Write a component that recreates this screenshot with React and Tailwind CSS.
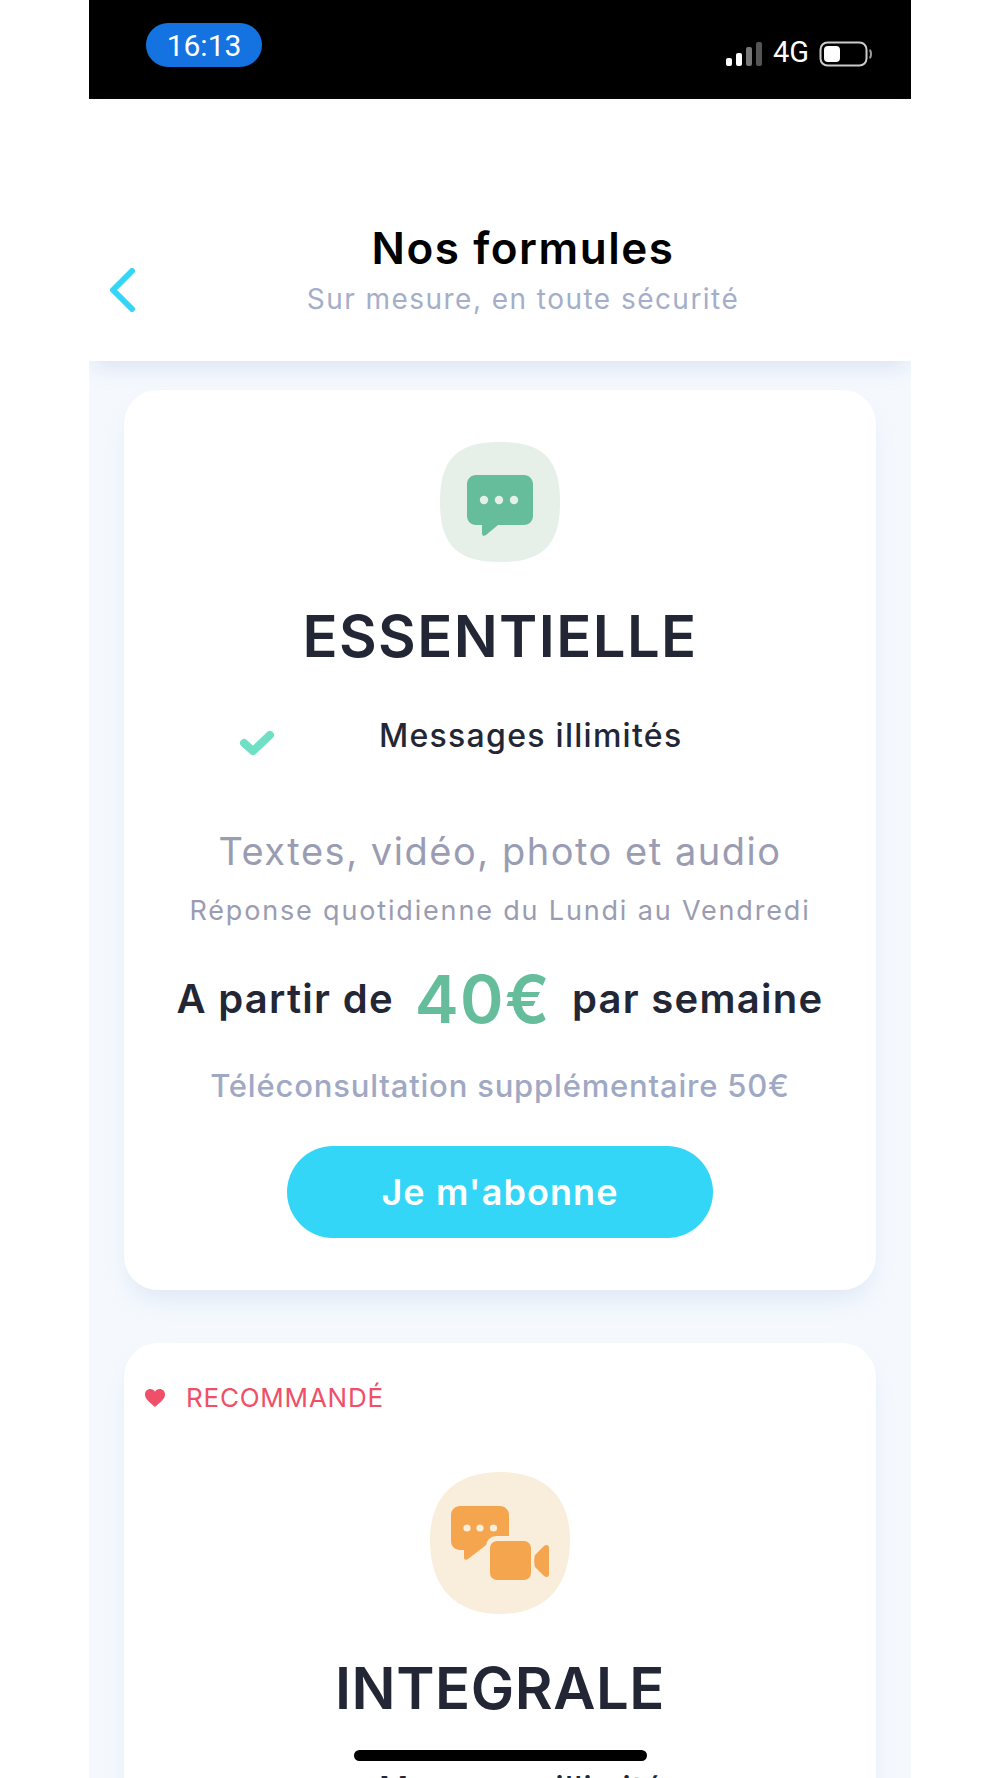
const font = { fontFamily: "'Inter', 'Noto Sans', sans-serif" };

function ChatIcon() {
	return (
		<svg width="120" height="120" viewBox="0 0 120 120" className="block">
			<path d="M60 0C103 0 120 17 120 60C120 103 103 120 60 120C17 120 0 103 0 60C0 17 17 0 60 0Z" fill="#e6efe8" />
			<path d="M36 33H84C89 33 93 37 93 42V74C93 79 89 83 84 83H58L46 93C44 94.500 42 94 42 91V83H36C31 83 27 79 27 74V42C27 37 31 33 36 33Z" fill="#66bd9c" />
			<circle cx="44" cy="58" r="4.200" fill="#e6efe8" />
			<circle cx="59" cy="58" r="4.200" fill="#e6efe8" />
			<circle cx="74" cy="58" r="4.200" fill="#e6efe8" />
		</svg>
	);
}

function ChatVideoIcon() {
	return (
		<svg width="140" height="142" viewBox="0 0 140 142" className="block">
			<path d="M70 0C116 0 140 26 140 68C140 114 116 142 70 142C24 142 0 114 0 68C0 26 24 0 70 0Z" fill="#f9eedb" />
			<path d="M30 34H70C75 34 79 38 79 43V70H60L38 87C36 88.500 34 88 34 85V78H30C25 78 21 74 21 69V43C21 38 25 34 30 34Z" fill="#f5a54d" />
			<circle cx="37" cy="56" r="3.600" fill="#f9eedb" />
			<circle cx="50" cy="56" r="3.600" fill="#f9eedb" />
			<circle cx="63.500" cy="56" r="3.600" fill="#f9eedb" />
			<rect x="56" y="64" width="50" height="48" rx="10" fill="#f9eedb" />
			<rect x="60" y="69" width="41" height="39" rx="7" fill="#f5a54d" />
			<path d="M105 83L114 74C116.500 72 119 73 119 76V102C119 105 116.500 106 114 104L105 95C104 92 104 86 105 83Z" fill="#f5a54d" />
		</svg>
	);
}

function StatusBar() {
	return (
		<div className="h-[99px] bg-black flex items-start justify-between pl-[57px] pr-[38px]">
			<div className="mt-[23px] w-[116px] h-[44px] rounded-[22px] bg-[#1473e0] flex items-center justify-center text-white text-[30px] pt-[1px] font-['Roboto',sans-serif]">
				16:13
			</div>
			<div className="mt-[40px] flex items-center gap-[10px]">
				<svg width="38" height="26" viewBox="0 0 38 26">
					<rect x="1" y="17" width="6" height="8" rx="2" fill="#fff" />
					<rect x="11" y="12" width="6" height="13" rx="2" fill="#fff" />
					<rect x="21" y="6" width="6" height="19" rx="2" fill="#777" />
					<rect x="31" y="1" width="6" height="24" rx="2" fill="#555" />
				</svg>
				<span className="text-white text-[29px] leading-none -mt-[2px] font-['Roboto',sans-serif]">4G</span>
				<svg width="54" height="26" viewBox="0 0 54 26">
					<rect x="1.500" y="1.500" width="46" height="23" rx="7" fill="none" stroke="#ccc" strokeWidth="2" />
					<rect x="5" y="5" width="16" height="16" rx="4" fill="#fff" />
					<path d="M50.500 9C52.500 10 52.500 16 50.500 17" fill="none" stroke="#999" strokeWidth="2" />
				</svg>
			</div>
		</div>
	);
}

function Header() {
	return (
		<div className="relative h-[262px] bg-white flex items-start shadow-[0_10px_20px_-4px_rgba(150,170,215,0.28)]">
			<div className="w-[46px] pl-[20px] pt-[169px] shrink-0">
				<svg width="27" height="44" viewBox="0 0 27 44" fill="none" stroke="#33d6f6" strokeWidth="6" strokeLinecap="round" strokeLinejoin="round">
					<path d="M23 3L4 22L23 41" />
				</svg>
			</div>
			<div className="flex-1 pt-[122px] text-center">
				<h1 className="text-[44px] leading-[54px] font-semibold text-black tracking-[0.035em]">Nos formules</h1>
				<p className="text-[28px] leading-[36px] mt-[6px] tracking-[0.052em] text-[#a5aec8]">Sur mesure, en toute sécurité</p>
			</div>
		</div>
	);
}

function FeatureRow({ className }) {
	return (
		<div className={`w-full flex items-center pl-[115px] ${className}`}>
			<svg width="36" height="28" viewBox="0 0 36 28" className="mt-[14px]">
				<path d="M5 14L14 22L31 6" fill="none" stroke="#6fe0c4" strokeWidth="8" strokeLinecap="round" strokeLinejoin="round" />
			</svg>
			<span className="ml-[104px] text-[32px] leading-[40px] font-medium text-[#232735] tracking-[0.04em]">Messages illimités</span>
		</div>
	);
}

function EssentielleCard() {
	return (
		<section className="h-[900px] rounded-[34px] bg-white shadow-[0_14px_26px_-6px_rgba(130,160,210,0.2)] flex flex-col items-center pt-[52px]">
			<ChatIcon />
			<h2 className="mt-[39px] text-[58px] leading-[70px] font-semibold text-[#232735] tracking-[0.024em]">ESSENTIELLE</h2>
			<FeatureRow className="mt-[44px]" />
			<p className="mt-[70px] text-[38px] leading-[48px] text-[#9a9cb2] tracking-[0.04em]">Textes, vidéo, photo et audio</p>
			<p className="mt-[18px] text-[27px] leading-[36px] text-[#9a9cb2] tracking-[0.068em]">Réponse quotidienne du Lundi au Vendredi</p>
			<div className="mt-[32px] flex items-center h-[76px] text-[#232735] font-semibold text-[40px] tracking-[0.032em]">
				<span>A partir de</span>
				<span className="mx-[21px] text-[66px] leading-none text-[#66bd9c] font-semibold">40€</span>
				<span>par semaine</span>
			</div>
			<p className="mt-[29px] text-[31px] leading-[40px] font-medium text-[#a0a9c4] tracking-[0.026em]">Téléconsultation supplémentaire 50€</p>
			<button className="mt-[40px] w-[426px] h-[92px] rounded-full bg-[#33d6f6] text-white text-[36px] font-semibold tracking-[0.03em]">Je m'abonne</button>
		</section>
	);
}

function IntegraleCard() {
	return (
		<section className="mt-[53px] rounded-[34px] bg-white pt-[40px] pb-[40px] shadow-[0_14px_26px_-6px_rgba(130,160,210,0.2)]">
			<div className="flex items-center pl-[20px] h-[30px]">
				<svg width="22" height="20" viewBox="0 0 24 22">
					<path d="M12 21C5 15 1 12 1 7C1 3.500 3.500 1 6.800 1C9 1 11 2.200 12 4C13 2.200 15 1 17.200 1C20.500 1 23 3.500 23 7C23 12 19 15 12 21Z" fill="#ef4f68" />
				</svg>
				<span className="ml-[20px] text-[26px] leading-none text-[#ef4f68] tracking-[0.03em]">RECOMMANDÉ</span>
			</div>
			<div className="mt-[59px] flex justify-center">
				<ChatVideoIcon />
			</div>
			<h2 className="mt-[39px] text-center text-[58px] leading-[70px] font-semibold text-[#232735] tracking-[0.01em]">INTEGRALE</h2>
			<FeatureRow className="mt-[45px]" />
		</section>
	);
}

export default function App() {
	return (
		<div className="relative w-[1000px] h-[1778px] overflow-hidden bg-white" style={font}>
			<div className="mx-auto w-[822px] h-full overflow-hidden bg-[#f5f9fe]">
				<StatusBar />
				<Header />
				<main className="px-[35px] pt-[29px]">
					<EssentielleCard />
					<IntegraleCard />
				</main>
			</div>
			{/* home indicator */}
			<div className="absolute left-[354px] top-[1750px] w-[293px] h-[11px] rounded-full bg-black" />
		</div>
	);
}
